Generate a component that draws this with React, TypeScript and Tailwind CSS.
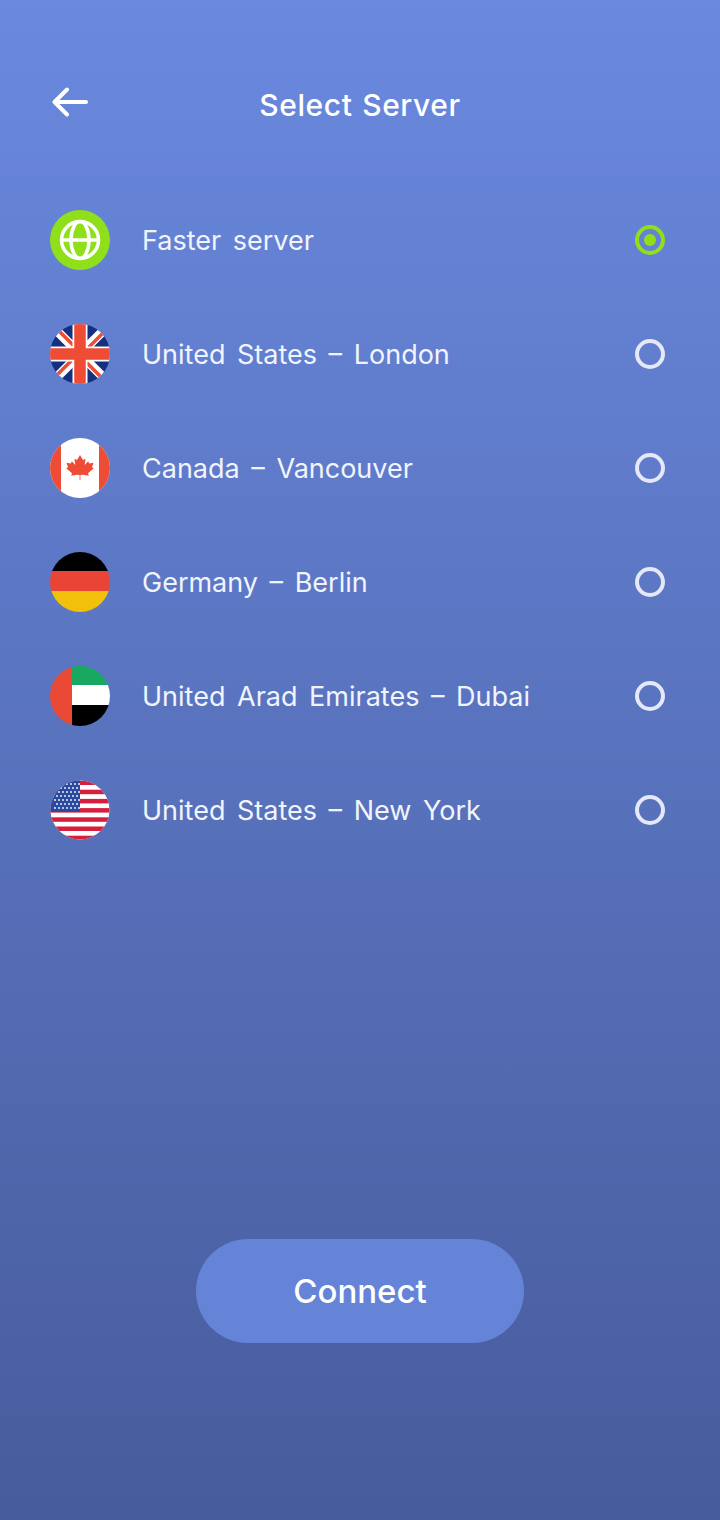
import React from "react";

function Globe() {
  return (
    <svg viewBox="0 0 60 60" className="w-[60px] h-[60px] shrink-0">
      <circle cx="30" cy="30" r="30" fill="#8fe01a" />
      <g fill="none" stroke="#fff" strokeWidth="3.500">
        <circle cx="30" cy="30" r="18.500" />
        <ellipse cx="30" cy="30" rx="9" ry="18.500" />
        <path d="M11.500 30h37" />
      </g>
    </svg>
  );
}

function UK() {
  return (
    <svg viewBox="0 0 60 60" className="w-[60px] h-[60px] shrink-0">
      <clipPath id="uk"><circle cx="30" cy="30" r="30" /></clipPath>
      <g clipPath="url(#uk)">
        <rect width="60" height="60" fill="#15307f" />
        <path d="M4 4l52 52M56 4L4 56" stroke="#fff" strokeWidth="9" />
        <path d="M7 5l21 21M32 34l21 21M55 7L34 28M26 32L5 53" stroke="#ee4c35" strokeWidth="3.500" />
        <path d="M30 0v60M0 30h60" stroke="#fff" strokeWidth="15" />
        <path d="M30 0v60M0 30h60" stroke="#ee4c35" strokeWidth="11.500" />
      </g>
    </svg>
  );
}

function Canada() {
  return (
    <svg viewBox="0 0 60 60" className="w-[60px] h-[60px] shrink-0">
      <clipPath id="ca"><circle cx="30" cy="30" r="30" /></clipPath>
      <g clipPath="url(#ca)">
        <rect width="60" height="60" fill="#fff" />
        <rect width="11" height="60" fill="#ee4c35" />
        <rect x="49" width="11" height="60" fill="#ee4c35" />
        <path
          d="M30 17l3 5 2.600-1.300-1 6.300 3.600-3.800 1 2.300 4.300-.8-1.500 4.600 1.800 1-5.800 4.900.8 2.500-5.700-.9-2.700.3v5h-.8v-5l-2.700-.3-5.700.9.800-2.500-5.800-4.900 1.800-1-1.500-4.600 4.300.8 1-2.300 3.600 3.800-1-6.300L27 22z"
          fill="#ee4c35"
        />
      </g>
    </svg>
  );
}

function Germany() {
  return (
    <svg viewBox="0 0 60 60" className="w-[60px] h-[60px] shrink-0">
      <clipPath id="de"><circle cx="30" cy="30" r="30" /></clipPath>
      <g clipPath="url(#de)">
        <rect width="60" height="20" fill="#000" />
        <rect y="19" width="60" height="21" fill="#e94435" />
        <rect y="39" width="60" height="21" fill="#f2c00a" />
      </g>
    </svg>
  );
}

function Uae() {
  return (
    <svg viewBox="0 0 60 60" className="w-[60px] h-[60px] shrink-0">
      <clipPath id="ae"><circle cx="30" cy="30" r="30" /></clipPath>
      <g clipPath="url(#ae)">
        <rect x="22" width="38" height="19" fill="#19a862" />
        <rect x="22" y="19" width="38" height="20" fill="#fff" />
        <rect x="22" y="39" width="38" height="21" fill="#000" />
        <rect width="22" height="60" fill="#ea4a35" />
      </g>
    </svg>
  );
}

function Usa() {
  const stripes = [0, 1, 2, 3, 4, 5, 6];
  const stars: [number, number][] = [];
  for (let row = 0; row < 7; row++) {
    for (let col = 0; col < 7; col++) {
      if (row % 2 === 0 || col < 6) stars.push([5 + col * 4 + (row % 2 ? 2 : 0), 4 + row * 4]);
    }
  }
  return (
    <svg viewBox="0 0 60 60" className="w-[60px] h-[60px] shrink-0">
      <clipPath id="us"><circle cx="30" cy="30" r="29.500" /></clipPath>
      <g clipPath="url(#us)">
        <rect width="60" height="60" fill="#fff" />
        {stripes.map((n) => (
          <rect key={n} y={n * 9.2 + 0.5} width="60" height="4.500" fill="#d61f3c" />
        ))}
        <rect width="30" height="32" fill="#2a4a9f" />
        {stars.map(([x, y]) => (
          <circle key={`${x}-${y}`} cx={x} cy={y} r="0.900" fill="#fff" />
        ))}
      </g>
    </svg>
  );
}

const servers = [
  { name: "Faster server", flag: <Globe />, active: true },
  { name: "United States – London", flag: <UK /> },
  { name: "Canada – Vancouver", flag: <Canada /> },
  { name: "Germany – Berlin", flag: <Germany /> },
  { name: "United Arad Emirates – Dubai", flag: <Uae /> },
  { name: "United States – New York", flag: <Usa /> },
];

export default function App() {
  return (
    <div className="w-[720px] h-[1520px] flex flex-col bg-linear-to-b from-[#6a89df] to-[#475c9c] font-['Inter',sans-serif] text-white">
      <header className="relative mt-[84px] h-[42px] flex items-center justify-center">
        <svg viewBox="0 0 36 30" className="absolute left-[52px] top-[3px] w-[36px] h-[30px]" fill="none" stroke="#fff" strokeWidth="4" strokeLinecap="round" strokeLinejoin="round">
          <path d="M34 15H2.500M15 2.500L2.500 15 15 27.500" />
        </svg>
        <h1 className="text-[30px] font-medium leading-none tracking-[0.6px] [word-spacing:1px]">Select Server</h1>
      </header>

      <ul className="mt-[84px] flex flex-col gap-[54px] pl-[50px] pr-[55px]">
        {servers.map((s) => (
          <li key={s.name} className="h-[60px] flex items-center">
            {s.flag}
            <span className="ml-[32px] text-[27px] leading-none text-[#f1f4fd] [word-spacing:4px]">{s.name}</span>
            {s.active ? (
              <span className="ml-auto w-[30px] h-[30px] rounded-full border-4 border-[#8fe01a] flex items-center justify-center">
                <span className="w-[12px] h-[12px] rounded-full bg-[#8fe01a]" />
              </span>
            ) : (
              <span className="ml-auto w-[30px] h-[30px] rounded-full border-4 border-[#e4e8f8]" />
            )}
          </li>
        ))}
      </ul>

      <button className="mt-auto mb-[177px] mx-auto w-[328px] h-[104px] pt-[2px] rounded-[52px] bg-[#6584d8] text-[33px] font-medium">
        Connect
      </button>
    </div>
  );
}
